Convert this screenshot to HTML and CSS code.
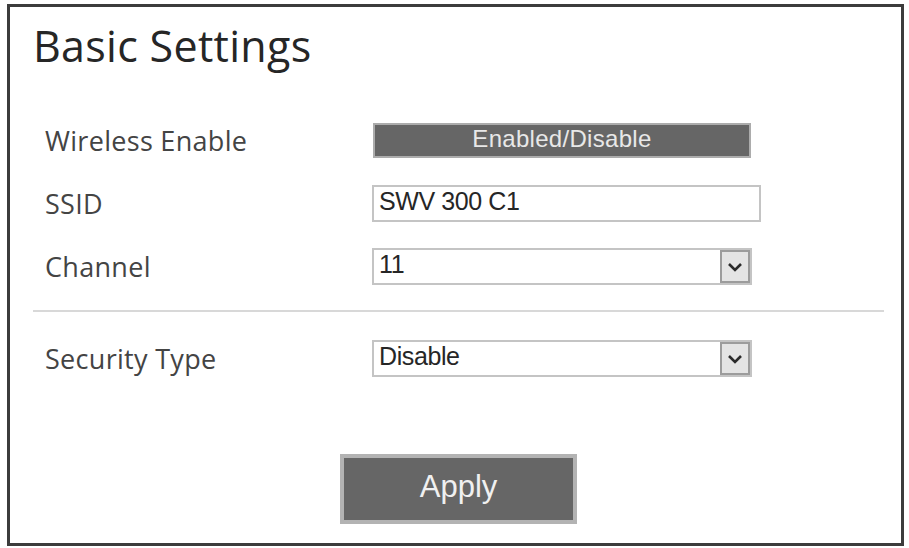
FILE: index.html
```html
<!DOCTYPE html>
<html lang="en">
<head>
<meta charset="utf-8">
<title>Basic Settings</title>
<link rel="stylesheet" href="styles.css">
</head>
<body>
<div class="panel">
  <h1 class="title">Basic Settings</h1>
  <div class="form">
    <div class="row row-toggle">
      <span class="label">Wireless Enable</span>
      <button class="toggle" type="button">Enabled/Disable</button>
    </div>
    <div class="row row-ssid">
      <span class="label">SSID</span>
      <div class="field text-field">SWV 300 C1</div>
    </div>
    <div class="row row-channel">
      <span class="label">Channel</span>
      <div class="field select-field">
        <span class="value">11</span>
        <span class="arrow"><svg width="16" height="10" viewBox="0 0 16 10"><path d="M2 2 L8 8 L14 2" fill="none" stroke="#2b2b2b" stroke-width="2.6"/></svg></span>
      </div>
    </div>
    <hr class="divider">
    <div class="row row-security">
      <span class="label">Security Type</span>
      <div class="field select-field">
        <span class="value">Disable</span>
        <span class="arrow"><svg width="16" height="10" viewBox="0 0 16 10"><path d="M2 2 L8 8 L14 2" fill="none" stroke="#2b2b2b" stroke-width="2.6"/></svg></span>
      </div>
    </div>
  </div>
  <div class="actions">
    <button class="apply" type="button">Apply</button>
  </div>
</div>
</body>
</html>
```
FILE: styles.css
```css
html, body {
  margin: 0;
  padding: 0;
  background: #ffffff;
}

body {
  padding: 4px 5px 2px 7px;
  height: 548px;
  box-sizing: border-box;
}

.panel {
  height: 100%;
  box-sizing: border-box;
  border: 3px solid #3c3c3c;
  display: flex;
  flex-direction: column;
  font-family: "Open Sans", "Noto Sans", sans-serif;
}

.title {
  margin: 15px 0 0 23px;
  font-weight: 400;
  font-size: 43px;
  line-height: 48px;
  color: #262626;
  letter-spacing: 0.3px;
}

.form {
  margin-top: 53px;
  display: flex;
  flex-direction: column;
}

.row {
  display: flex;
  align-items: center;
  padding-left: 35px;
}

.label {
  width: 327px;
  font-size: 27px;
  color: #444444;
  letter-spacing: 0.3px;
}

.row-toggle { height: 35px; }
.row-ssid { height: 37px; margin-top: 27px; }
.row-channel { height: 37px; margin-top: 26px; }
.row-security { height: 37px; }

.toggle {
  margin-left: 1px;
  width: 378px;
  height: 35px;
  box-sizing: border-box;
  border: 2px solid #acacac;
  background: #666666;
  color: #e8e8e8;
  font-family: "Liberation Sans", Arial, sans-serif;
  font-size: 24px;
  letter-spacing: 0.3px;
  padding: 0 0 5px;
}

.field {
  box-sizing: border-box;
  height: 37px;
  border: 2px solid #c4c4c4;
  background: #ffffff;
  font-family: "Liberation Sans", Arial, sans-serif;
  font-size: 25px;
  color: #262626;
  display: flex;
  align-items: center;
  letter-spacing: -0.4px;
}

.text-field {
  width: 389px;
  padding: 0 0 5px 5px;
}

.select-field {
  width: 380px;
  justify-content: space-between;
}

.select-field .value {
  padding: 0 0 5px 5px;
}

.arrow {
  width: 30px;
  height: 33px;
  box-sizing: border-box;
  border: 2px solid #9c9c9c;
  background: #e4e4e4;
  display: flex;
  align-items: center;
  justify-content: center;
}

.divider {
  margin: 25px 17px 28px 23px;
  border: 0;
  border-top: 2px solid #d8d8d8;
  height: 0;
}

.actions {
  margin-top: 77px;
  padding-left: 330px;
}

.apply {
  width: 237px;
  height: 70px;
  box-sizing: border-box;
  border: 4px solid #b3b3b3;
  background: #666666;
  color: #f0f0f0;
  font-family: "Liberation Sans", Arial, sans-serif;
  font-size: 31px;
  padding: 0 0 4px;
}
```
